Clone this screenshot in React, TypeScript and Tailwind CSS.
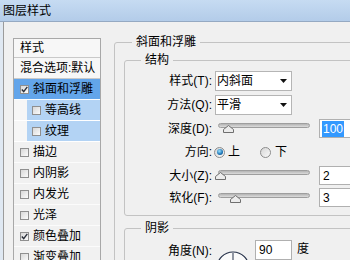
import React from "react";

const font = "font-['Liberation_Sans','Noto_Sans_CJK_SC',sans-serif]";

type Item = { label: string; checked?: boolean; kind?: "sel" | "sub" };

const items: Item[] = [
  { label: "斜面和浮雕", checked: true, kind: "sel" },
  { label: "等高线", kind: "sub" },
  { label: "纹理", kind: "sub" },
  { label: "描边" },
  { label: "内阴影" },
  { label: "内发光" },
  { label: "光泽" },
  { label: "颜色叠加", checked: true },
  { label: "渐变叠加" },
];

function Checkbox({ checked }: { checked?: boolean }) {
  return (
    <span className="flex h-[9px] w-[9px] shrink-0 items-center justify-center border border-[#8f8f8f] bg-gradient-to-br from-[#d8d8d8] to-[#fbfbfb]">
      {checked && (
        <svg width="7" height="7" viewBox="0 0 7 7">
          <path d="M0.8 3.6 L2.7 5.6 L6.3 0.9" fill="none" stroke="#2a2f3a" strokeWidth="1.4" />
        </svg>
      )}
    </span>
  );
}

function ListRow({ item }: { item: Item }) {
  if (item.kind === "sub") {
    return (
      <div className="flex h-[21px] border-b border-white bg-[#f6f6f6]">
        <div className="ml-[13px] flex flex-1 items-center gap-[4px] bg-[#b3d3f4] pl-[5px]">
          <Checkbox checked={item.checked} />
          <span>{item.label}</span>
        </div>
      </div>
    );
  }
  return (
    <div
      className={`flex h-[21px] items-center gap-[4px] border-b pl-[6px] ${
        item.kind === "sel" ? "border-white bg-[#63a5ea]" : "border-[#fbfbfb] bg-[#f1f1f1]"
      }`}
    >
      <Checkbox checked={item.checked} />
      <span>{item.label}</span>
    </div>
  );
}

function Select({ value }: { value: string }) {
  return (
    <div className="ml-[3px] flex h-[20px] w-[77px] items-center justify-between border border-[#b5b5b5] bg-white pl-[1px] pr-[4px]">
      <span>{value}</span>
      <svg width="7" height="4" viewBox="0 0 7 4">
        <polygon points="0,0 7,0 3.5,4" fill="#111" />
      </svg>
    </div>
  );
}

function Slider({ pos }: { pos: number }) {
  return (
    <div className="relative ml-[6px] h-full w-[92px]">
      <div className="absolute left-0 right-0 top-[6px] h-[5px] rounded-full border border-[#9e9e9e] bg-gradient-to-b from-[#b4b4b4] to-[#dcdcdc]" />
      <svg className="absolute top-[8px]" style={{ left: pos }} width="11" height="8" viewBox="0 0 11 8">
        <polygon points="0.5,7.5 0.5,4.5 5.5,0.5 10.5,4.5 10.5,7.5" fill="#ececec" stroke="#6f6f6f" />
      </svg>
    </div>
  );
}

function NumInput({ value, selected }: { value: string; selected?: boolean }) {
  return (
    <div className="ml-[9px] flex h-[19px] w-[40px] items-center border border-[#b0b0b0] bg-white pl-[2px]">
      <span className={selected ? "bg-[#3399ff] px-[1px] text-white" : "pl-[1px]"}>{value}</span>
    </div>
  );
}

function Radio({ checked }: { checked?: boolean }) {
  return (
    <span className="flex h-[11px] w-[11px] shrink-0 items-center justify-center rounded-full border border-[#8c8c8c] bg-gradient-to-br from-[#d6d6d6] to-[#fafafa]">
      {checked && (
        <span className="h-[6px] w-[6px] rounded-full bg-[radial-gradient(circle_at_40%_35%,#9be2ff,#1c74b6_60%,#0b3c6e)]" />
      )}
    </span>
  );
}

function Label({ text }: { text: string }) {
  return <span className="w-[87px] shrink-0 text-right">{text}</span>;
}

export default function App() {
  return (
    <div className={`flex h-[260px] w-[350px] flex-col overflow-hidden bg-[#dfe8f2] text-[12px] leading-[16px] text-black ${font}`}>
      {/* title bar */}
      <div className="flex h-[22px] shrink-0 items-center border-b border-[#95a9c2] bg-gradient-to-b from-[#c6dbf2] to-[#b3cce9] pl-[3px]">
        <span className="text-[12px]">图层样式</span>
      </div>

      <div className="flex flex-1 pl-[3px]">
        <div className="flex flex-1 border-l border-[#9b9b9b] bg-[#f0f0f0]">
          {/* effects list */}
          <div className="ml-[9px] mt-[16px] w-[88px] shrink-0 self-start border border-[#a8a8a8] bg-[#f1f1f1]">
            <div className="flex h-[19px] items-center border-b border-[#c9c9c9] bg-[#f7f7f7] pl-[6px]">样式</div>
            <div className="flex h-[21px] items-center border-b border-[#c9c9c9] bg-[#f7f7f7] pl-[6px]">混合选项:默认</div>
            {items.map((it) => (
              <ListRow key={it.label} item={it} />
            ))}
          </div>

          {/* settings panel */}
          <fieldset className="ml-[13px] mt-[12px] w-[260px] shrink-0 self-start rounded-[3px] border border-[#c3c3c3] pl-[9px] pr-[9px] pt-[2px]">
            <legend className="ml-[8px] px-[4px]">斜面和浮雕</legend>

            <fieldset className="rounded-[3px] border border-[#c3c3c3] pb-[7px] pt-[1px]">
              <legend className="ml-[16px] px-[4px]">结构</legend>
              <div className="flex h-[24px] items-center">
                <Label text="样式(T):" />
                <Select value="内斜面" />
              </div>
              <div className="flex h-[24px] items-center">
                <Label text="方法(Q):" />
                <Select value="平滑" />
              </div>
              <div className="flex h-[23px] items-center">
                <Label text="深度(D):" />
                <Slider pos={5} />
                <NumInput value="100" selected />
              </div>
              <div className="flex h-[24px] items-center">
                <Label text="方向:" />
                <span className="ml-[2px]"><Radio checked /></span>
                <span className="ml-[3px]">上</span>
                <span className="ml-[20px]"><Radio /></span>
                <span className="ml-[4px]">下</span>
              </div>
              <div className="flex h-[23px] items-center">
                <Label text="大小(Z):" />
                <Slider pos={-3} />
                <NumInput value="2" />
              </div>
              <div className="flex h-[21px] items-center">
                <Label text="软化(F):" />
                <Slider pos={12} />
                <NumInput value="3" />
              </div>
            </fieldset>

            <fieldset className="mt-[4px] h-[60px] rounded-[3px] border border-[#c3c3c3]">
              <legend className="ml-[16px] px-[4px]">阴影</legend>
              <div className="mt-[3px] flex items-start">
                <span className="w-[87px] shrink-0 text-right leading-[24px]">角度(N):</span>
                <svg className="ml-[4px] mt-[12px] shrink-0" width="34" height="34" viewBox="0 0 34 34">
                  <circle cx="17" cy="17" r="16" fill="#fafafa" stroke="#26324a" strokeWidth="1.2" />
                  <line x1="17" y1="17" x2="17" y2="2" stroke="#26324a" strokeWidth="1" />
                </svg>
                <div className="ml-[5px] mt-[1px] flex h-[20px] w-[37px] items-center border border-[#b0b0b0] bg-white pl-[3px]">90</div>
                <span className="ml-[5px] leading-[20px]">度</span>
              </div>
            </fieldset>
          </fieldset>
        </div>
      </div>
    </div>
  );
}
